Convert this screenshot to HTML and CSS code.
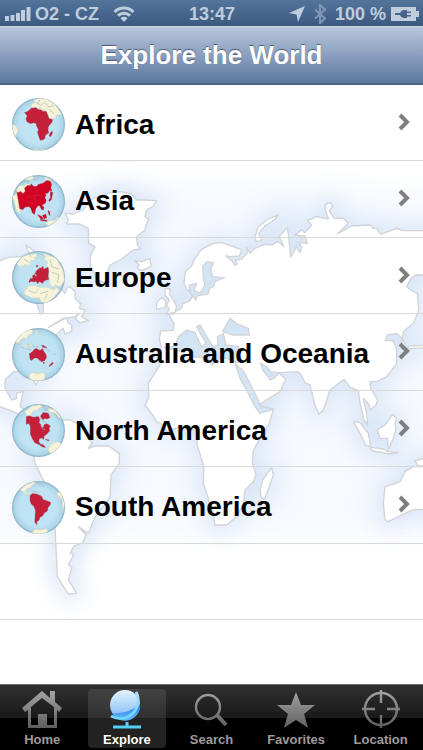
FILE: index.html
```html
<!DOCTYPE html>
<html lang="en">
<head>
    <meta charset="UTF-8">
    <meta name="viewport" content="width=device-width, initial-scale=1.0">
    <title>Explore the World</title>
    <link rel="stylesheet" href="styles.css">
</head>
<body>
    <div class="status-bar">
        <div class="status-left">
            <svg class="signal" viewBox="0 0 26 14" width="26" height="14">
                <path d="M0 9h4v5H0zM5.500 8h4v6h-4zM11 6h4v8h-4zM16 3h4v11h-4zM21.500 0h4v14h-4z"/>
            </svg>
            <span>O2 - CZ</span>
            <svg class="wifi" viewBox="0 0 22 16" width="22" height="16">
                <path d="M1.500 6a13.500 13.500 0 0 1 19 0M5 9.600a8.600 8.600 0 0 1 12 0"/>
                <path class="dot" d="M7.500 12.200a5 5 0 0 1 7 0L11 16z"/>
            </svg>
        </div>
        <div class="status-time">13:47</div>
        <div class="status-right">
            <svg viewBox="0 0 16 16" width="16" height="16"><path d="M16 0L9 16 7.600 8.400 0 7z"/></svg>
            <svg class="bluetooth" viewBox="0 0 12 20" width="12" height="20"><path d="M1 5.500l10 9L6 19V1l5 4.500-10 9"/></svg>
            <span>100 %</span>
            <svg viewBox="0 0 28 14" width="28" height="14">
                <path fill-rule="evenodd" d="M0 0h25v4h3v6h-3v4H0zM4 6v2h5c1 2 2 3 4 3h3V9.500h4V8h-4V6h4V4.500h-4V3h-3c-2 0-3 1-4 3z"/>
            </svg>
        </div>
    </div>

    <header class="nav-bar">
        <h1>Explore the World</h1>
    </header>

    <main class="content">
        <svg class="world-map" viewBox="0 -195 1269 1800" preserveAspectRatio="xMidYMin slice" aria-hidden="true">
            <defs>
                <filter id="halo" x="-20%" y="-20%" width="140%" height="140%"><feGaussianBlur stdDeviation="34"/></filter>
                <g id="land">
                    <!-- Greenland and Iceland -->
                    <path d="M195 190L220 192 250 180 270 150 320 130 360 125 395 132 410 150 430 150 470 152 460 168 440 180 435 200 446 208 438 225 435 240 410 260 412 285 422 297 400 300 360 330 330 345 325 360 315 400 290 385 272 350 270 320 285 290 266 280 265 235 240 222 200 222 205 208z"/>
                    <path d="M405 332L425 335 450 325 453 350 425 362 412 355 418 345z"/>
                    <!-- North America -->
                    <path d="M-90 340L0 332 25 322 90 318 78 285 95 298 105 306 125 340 120 370 60 400 60 430 110 460 120 492 130 490 130 460 150 410 170 400 195 430 200 415 210 410 225 425 225 445 242 462 238 475 255 480 245 500 265 512 240 518 225 505 238 490 225 500 190 505 145 532 200 503 205 520 215 525 215 545 195 552 190 535 160 560 110 640 115 690 108 705 95 680 90 665 40 665 15 690 15 715 35 750 50 745 50 730 70 725 60 770 90 790 100 800 100 830 70 800 40 785 0 770 -90 730z"/>
                    <!-- South America -->
                    <path d="M100 900L105 850 130 800 190 810 210 810 240 825 260 850 275 880 265 895 285 888 325 888 358 910 358 940 333 975 330 1040 320 1058 300 1080 290 1090 265 1150 235 1130 258 1155 248 1178 222 1188 210 1210 220 1210 218 1220 205 1245 216 1252 205 1290 218 1310 230 1330 205 1332 172 1280 165 1130 135 1000 105 940z"/>
                    <!-- Europe, Asia and Africa -->
                    <path d="M484 590L478 570 482 543 520 541 522 520 505 492 520 492 525 485 545 475 548 462 570 452 578 440 575 430 560 418 552 400 556 365 575 348 585 325 605 298 640 280 665 278 700 290 725 300 718 318 690 320 678 318 695 332 705 346 712 342 705 330 725 328 742 308 740 292 750 310 765 295 795 283 815 285 835 275 852 290 838 260 862 232 866 260 872 322 885 300 888 288 900 308 905 292 895 278 922 280 915 258 900 258 885 255 905 240 915 248 935 225 922 212 950 200 985 207 975 175 978 162 990 158 998 168 988 182 1002 205 1030 205 1045 220 1012 252 1055 228 1110 225 1120 235 1130 235 1142 252 1165 245 1190 235 1210 242 1269 242 1300 240 1300 375 1245 375 1230 390 1220 410 1240 425 1252 430 1256 480 1240 520 1210 545 1207 565 1225 600 1210 600 1205 565 1190 550 1162 555 1155 572 1180 572 1190 600 1190 640 1160 680 1130 695 1110 695 1112 715 1133 750 1128 765 1110 780 1108 765 1090 745 1100 790 1103 825 1092 810 1080 760 1075 722 1050 712 1032 688 990 720 980 750 970 780 957 793 945 765 930 705 915 698 905 678 895 665 835 668 857 687 840 725 775 765 785 780 820 778 808 820 790 850 760 900 757 940 768 975 760 995 735 1020 730 1060 710 1100 680 1125 645 1125 640 1090 610 1000 612 950 590 880 595 860 590 845 570 835 540 830 500 845 490 825 470 815 458 795 435 765 447 740 445 700 480 645z"/>
                    <path d="M815 953L820 975 795 1045 785 1045 780 1025 788 990z"/>
                    <path d="M495 415L512 417 508 432 520 450 530 470 525 487 498 492 508 478 500 465 508 450 495 435zM470 458L485 442 497 455 495 472 470 478z"/>
                    <path d="M768 275L766 258 775 230 800 210 835 194 825 208 795 228 776 250 785 272z"/>
                    <!-- Indonesia and Australia -->
                    <path d="M1060 815L1080 818 1105 850 1112 890 1097 885 1080 850zM1132 840L1155 825 1178 793 1190 805 1185 820 1188 840 1180 865 1165 898 1162 865 1140 865zM1112 892L1150 897 1165 905 1195 908 1170 912 1115 902z"/>
                    <path d="M1300 950L1240 950 1215 965 1200 995 1180 1002 1155 1010 1150 1060 1155 1110 1165 1115 1240 1078 1300 1080zM1245 932L1275 925 1300 935 1300 945 1255 948z"/>
                    <path d="M1215 598L1230 588 1300 585 1300 592 1240 595z"/>
                </g>
            </defs>
            <path class="ocean" d="M-90 130L300 100 1000 100 1350 130 1350 1160 -90 1160z" filter="url(#halo)"/>
            <use href="#land" class="coast-glow" filter="url(#halo)"/>
            <use href="#land" class="land"/>
            <!-- Baltic, Mediterranean, Black Sea, Red Sea, Persian Gulf -->
            <path class="sea" d="M608 350L620 335 640 338 632 360 638 380 672 383 645 395 640 410 628 415 625 432 590 438 588 450 568 425 568 405 590 400 582 420 600 430 615 405 610 380z"/>
            <path class="sea" d="M490 592L525 590 535 560 560 540 585 548 605 590 618 580 590 530 600 525 620 560 640 592 655 585 652 560 670 552 678 585 715 590 715 638 680 625 660 625 635 645 620 622 600 622 575 620 580 600 530 602z"/>
            <path class="sea" d="M668 545L690 505 712 522 745 535 748 555 700 555z"/>
            <path class="sea" d="M705 640L715 650 730 662 765 730 782 768 820 778 780 790 765 770 740 720 722 690z"/>
            <path class="sea" d="M782 640L800 650 812 665 838 668 822 685 810 690 800 675 788 660z"/>
        </svg>

        <ul class="continents">
            <li><a href="#africa">
                <svg class="globe" viewBox="0 0 156 156" aria-hidden="true">
                    <defs>
                        <radialGradient id="water" cx="50%" cy="50%" r="50%">
                            <stop offset="0.700" stop-color="#bfe3f3"/><stop offset="0.920" stop-color="#acd5e8"/><stop offset="1" stop-color="#84abc0"/>
                        </radialGradient>
                        <clipPath id="disc"><circle cx="78" cy="78" r="77"/></clipPath>
                    </defs>
                    <circle cx="78" cy="78" r="78" fill="url(#water)"/>
                    <g clip-path="url(#disc)">
                        <path class="other" d="M56 27l2-10 10-3-4-8 18-6 20 4 25 15 20 30-14 0-8 12-13 2-6-12-8-15-10-2-6-5-9 2-6-6-6 4zM0 78l12 4 6 14-6 14-8 10zM62 151l20 2 16-3-4 8H64z"/>
                        <path class="lines" d="M70 12l14 10 12-10 12 14 14-3M110 34l14 12M82 5l-6 12"/>
                        <path class="picked" d="M37 43l9-3 11-10 15-1 4 5 10 1 4 4 11 1 4 10 4 11 11 2-3 9-10 12-1 10 2 9-9 5-3 12-5 3-8 1-3-8-5-15 3-8-6-11 0-6-8-3-10 2-10-5-3-9 4-8zM118 97l1 7-5 10-4-2 1-7z"/>
                    </g>
                </svg>
                <span class="name">Africa</span>
                <svg class="chevron" viewBox="0 0 12 18" width="12" height="18" aria-hidden="true"><path d="M2 2l7 7-7 7"/></svg>
            </a></li>
            <li><a href="#asia">
                <svg class="globe" viewBox="0 0 156 156" aria-hidden="true">
                    <circle cx="78" cy="78" r="78" fill="url(#water)"/>
                    <g clip-path="url(#disc)">
                        <path class="other" d="M0 60l12-2 4-20 8-8 10 2 12-8 10 6-6 14-20 12-10 34 6 26-12-10zM96 144l14-10 16 0 8-10 8 4-20 26zM94 6l12 3 14 12-10-2-12-6zM38 12l20-8 8 4-14 8z"/>
                        <path class="lines" d="M30 22l14-4 6 6M62 12l8 3 8-7M50 14l-4 12"/>
                        <path class="picked deep" d="M14 49l4 3 8-4 6 7 7-7-2-10 10-8 7 2 3-6 6 7 9 1 5-6 14-4 12-8 9 2 5 10-3 9 4 10-7-2-5 8-9 2 4 6-5 4 5 9-3 9-10 6 6 6-2 9-6-4-4-9-5-1-7 9-4 17-6-4-5-15-6-4-11 2-6 7-9-3zM113 48l7 4-4 20-6 6-2-4 5-6zM75 116l13 6 5 9-9-2zM90 119l10-4 2 11-8 3zM84 131l20 2-3 3-17-2zM106 104l5 4 1 12-4-5z"/>
                        <path class="borders" d="M38 66l18-2 16-6 20 4M66 60l4 24M42 78l22 8"/>
                    </g>
                </svg>
                <span class="name">Asia</span>
                <svg class="chevron" viewBox="0 0 12 18" width="12" height="18" aria-hidden="true"><path d="M2 2l7 7-7 7"/></svg>
            </a></li>
            <li><a href="#europe">
                <svg class="globe" viewBox="0 0 156 156" aria-hidden="true">
                    <circle cx="78" cy="78" r="78" fill="url(#water)"/>
                    <g clip-path="url(#disc)">
                        <path class="other" d="M14 38l14-20 20-8 22-2 6 8-10 4 4 8-14 0-6 14-12-2-14 8zM90 6l40 15 20 35 5 30-14 20-14-6-8 8-8-12-4-46-6-8 4-10-12-8 6-8zM34 124l14-20 20-3 12 6 22-1 20 8 10-6 8 8-20 24-20 14-14-4-6-12-20 0-16-6z"/>
                        <path class="lines" d="M112 26l6 22 20 4M118 62l20 8-4 24M48 116l20 8 10-12M82 126l24-8M96 142l8-16M36 24l14 10M56 18l-4-8"/>
                        <path class="picked" d="M50 90l4-9 8 0-2-8 6-4 4 6 4-2-6-6 4-9 10-8 8 0 6 3 10-5 2 12-2 12 2 12-12 3-6 8-9-5-6 6-4-8-6 3-8-2-6 4zM72 42l4 1-1 4-4-1zM88 46l4 0-1 4-3-1z"/>
                    </g>
                </svg>
                <span class="name">Europe</span>
                <svg class="chevron" viewBox="0 0 12 18" width="12" height="18" aria-hidden="true"><path d="M2 2l7 7-7 7"/></svg>
            </a></li>
            <li><a href="#oceania">
                <svg class="globe" viewBox="0 0 156 156" aria-hidden="true">
                    <circle cx="78" cy="78" r="78" fill="url(#water)"/>
                    <g clip-path="url(#disc)">
                        <path class="other" d="M8 42l14-26L46 3l16 4-4 12-10 2-3 9-11 0-9 5-6 12zM52 134l14-3 4 4 22-4 6 8-4 14-30 4-14-9zM68 8l8 3-3 8-3-4zM28 46l10 6 6 9-8-5zM46 50l10-3 0 7-8 3z"/>
                        <path class="lines" d="M14 40l8 10M26 54l12 8M42 62l14 2M48 46l4 12M60 46l4 10M70 54l8 2M104 64l8 4M122 76l6 3"/>
                        <path class="picked" d="M51 76l8-5 8-9 6-2 4 4 6 2 6-6 5 9 7 11 0 8-6 9-8 2-8-6-5-5-8 0-9 8-4-5zM87 50l8 3 8 6-12-2zM119 101l3 2-6 7-7 3 2-4zM92 101l4 1-3 4z"/>
                    </g>
                </svg>
                <span class="name">Australia and Oceania</span>
                <svg class="chevron" viewBox="0 0 12 18" width="12" height="18" aria-hidden="true"><path d="M2 2l7 7-7 7"/></svg>
            </a></li>
            <li><a href="#north-america">
                <svg class="globe" viewBox="0 0 156 156" aria-hidden="true">
                    <circle cx="78" cy="78" r="78" fill="url(#water)"/>
                    <g clip-path="url(#disc)">
                        <path class="other" d="M38 22L58 6l24-4 8 7-12 4-2 7-10-2-10 12-6 6-6-2zM102 10l24 8 22 26-10-4-12-12-14-4zM106 136l6-16 10-6 12-3 12 6-6 14-18 18-8-4z"/>
                        <path class="lines" d="M90 8l14 8 6-6M120 26l12 6-2 8 12 4M94 16l10 4"/>
                        <path class="picked" d="M42 37l10-2 12 4 14-2 4 10-3 8 5 4 2 9 6 2 3-10 8-2 10 7-4 8 2 6-9 10-8 6 0 9-7-4-7 2-1 10 6 7 6 0 8 9-10-2-10-7-12-5-8-14-5-12 0-22-4-9-8 3zM84 35l8-10 14 2 6 12-8 5-8-2-4 4-6-5zM98 104l12 2-4 2z"/>
                        <path class="lines" d="M82 42l12 8M84 50l18 4M90 64l-2 8 10 4"/>
                    </g>
                </svg>
                <span class="name">North America</span>
                <svg class="chevron" viewBox="0 0 12 18" width="12" height="18" aria-hidden="true"><path d="M2 2l7 7-7 7"/></svg>
            </a></li>
            <li><a href="#south-america">
                <svg class="globe" viewBox="0 0 156 156" aria-hidden="true">
                    <circle cx="78" cy="78" r="78" fill="url(#water)"/>
                    <g clip-path="url(#disc)">
                        <path class="other" d="M24 26l18-16 20-7 10 3-12 6-6 8-8 2-8 8 8 6 6 5-10-2-10-8zM132 36l10-4 14 36-8 22 0-34-12-6zM60 148l10-6 18 2 12-4 6 6-10 10H64z"/>
                        <path class="lines" d="M56 28l12 3 8 3M66 10l10-4 6 4M84 10l10 3M138 44l8 10"/>
                        <path class="picked" d="M53 43l8-6 10 1 10 4 6 3 5 10 10 3 12 5-2 8-6 7-2 10-9 6-5 9-8 4-2 8-6 4-2 6 3 2-4 0-4-7 1-14 1-20-4-10-9-10-3-8z"/>
                    </g>
                </svg>
                <span class="name">South America</span>
                <svg class="chevron" viewBox="0 0 12 18" width="12" height="18" aria-hidden="true"><path d="M2 2l7 7-7 7"/></svg>
            </a></li>
            <li></li>
        </ul>
    </main>

    <nav class="tab-bar">
        <a href="#home" class="tab">
            <svg viewBox="0 0 40 40" width="40" height="40" aria-hidden="true">
                <defs>
                    <linearGradient id="grey" gradientUnits="userSpaceOnUse" x1="0" y1="2" x2="0" y2="40"><stop offset="0" stop-color="#a4a4a4"/><stop offset="1" stop-color="#5c5c5c"/></linearGradient>
                    <linearGradient id="sphere" x1="0" y1="0" x2="0" y2="1"><stop offset="0" stop-color="#e4f4ff"/><stop offset="1" stop-color="#79b5f5"/></linearGradient>
                    <linearGradient id="lower" x1="0" y1="0" x2="0" y2="1"><stop offset="0" stop-color="#2681ec"/><stop offset="1" stop-color="#62b8fb"/></linearGradient>
                    <linearGradient id="stand" gradientUnits="userSpaceOnUse" x1="0" y1="2" x2="0" y2="38"><stop offset="0" stop-color="#b9dcfa"/><stop offset="1" stop-color="#53d0f8"/></linearGradient>
                </defs>
                <path fill="url(#grey)" fill-rule="evenodd" d="M20 2l8 7V2h5v11l7 6-3 4-2-2v18H6V21l-3 2-3-4zM20 9L9 18v18h7V25h9v11h7V18z"/>
                <path fill="url(#grey)" d="M16 25h9v12h-9z"/>
            </svg>
            <span>Home</span>
        </a>
        <a href="#explore" class="tab active">
            <svg viewBox="0 0 40 40" width="40" height="40" aria-hidden="true">
                <circle cx="18" cy="16" r="15" fill="url(#sphere)"/>
                <path d="M5 24c10 1 20-2 28-9a15 15 0 0 1-28 9z" fill="url(#lower)"/>
                <path class="arm" d="M29 3a18 18 0 0 1-25 24M20 33v5M6 38h28"/>
            </svg>
            <span>Explore</span>
        </a>
        <a href="#search" class="tab">
            <svg class="outline" viewBox="0 0 40 40" width="40" height="40" aria-hidden="true">
                <circle cx="17" cy="18" r="12" stroke-width="2.500"/><path d="M26 26l9 10" stroke-width="4"/>
            </svg>
            <span>Search</span>
        </a>
        <a href="#favorites" class="tab">
            <svg viewBox="0 0 40 40" width="40" height="40" aria-hidden="true">
                <path fill="url(#grey)" d="M20 3l5 13h14L28 25l4 14-12-8-12 8 4-14L1 16h14z"/>
            </svg>
            <span>Favorites</span>
        </a>
        <a href="#location" class="tab">
            <svg class="outline" viewBox="0 0 40 40" width="40" height="40" aria-hidden="true">
                <circle cx="20" cy="20" r="16" stroke-width="2.500"/>
                <path class="ticks" d="M18.800 1h2.400v13h-2.400zM18.800 26h2.400v13h-2.400zM1 18.800h13v2.400H1zM26 18.800h13v2.400H26z"/>
            </svg>
            <span>Location</span>
        </a>
    </nav>
</body>
</html>
```
FILE: styles.css
```css
/* General Styles */
* {
    box-sizing: border-box;
}
body {
    margin: 0;
    min-height: 100vh;
    display: flex;
    flex-direction: column;
    font-family: "Liberation Sans", Arial, sans-serif;
    font-weight: bold;
    background-color: #fff;
    color: #000;
}
a {
    color: inherit;
    text-decoration: none;
}

/* Status Bar */
.status-bar {
    display: grid;
    grid-template-columns: 1fr auto 1fr;
    align-items: center;
    height: 26px;
    padding: 1px 4px 0 5px;
    background: linear-gradient(#54749a, #3c5980);
    color: #bfcddd;
    font-size: 18px;
    line-height: 24px;
}
.status-bar svg {
    fill: #bfcddd;
}
.status-left,
.status-right {
    display: flex;
    align-items: center;
    gap: 4px;
}
.status-right {
    justify-content: flex-end;
    gap: 5px;
}
.status-bar .wifi {
    margin-left: 10px;
    fill: none;
    stroke: #bfcddd;
    stroke-width: 3;
}
.status-bar .wifi .dot {
    fill: #bfcddd;
    stroke: none;
}
.status-bar .bluetooth {
    margin: 0 4px;
    fill: none;
    stroke: #7f98b6;
    stroke-width: 2;
}

/* Navigation Bar */
.nav-bar {
    height: 59px;
    border-top: 1px solid #cbd6e3;
    border-bottom: 2px solid #4a6388;
    background: linear-gradient(#b9c7da, #8a9fbe 50%, #5d789f);
}
.nav-bar h1 {
    margin: 0;
    text-align: center;
    font-size: 26px;
    line-height: 56px;
    color: #fff;
    text-shadow: 0 -1px 1px #4b5c78;
}

/* Continent List */
.content {
    position: relative;
    flex: 1;
    overflow: hidden;
}
.world-map {
    position: absolute;
    top: 0;
    left: 0;
    width: 100%;
    height: 100%;
}
.ocean {
    fill: #f6f9fe;
}
.coast-glow {
    fill: #d9e6f7;
    stroke: #d9e6f7;
    stroke-width: 36;
}
.land {
    fill: #fff;
    stroke: #d2d4d8;
    stroke-width: 4;
    stroke-linejoin: round;
}
.sea {
    fill: #d3e5f5;
    stroke: #d2d4d8;
    stroke-width: 4;
}
.continents {
    position: relative;
    margin: 0;
    padding: 0;
    list-style: none;
}
.continents li {
    height: 76px;
    border-bottom: 1px solid #d9d9d9;
}
.continents li:nth-child(even) {
    height: 77px;
}
.continents a {
    display: flex;
    align-items: center;
    height: 100%;
    padding: 4px 13px 0 12px;
}
.globe {
    width: 53px;
    height: 53px;
    margin-right: 10px;
}
.globe .other {
    fill: #f6f3d8;
    stroke: #d0d6c6;
    stroke-width: 2;
}
.globe .picked {
    fill: #c4203a;
    stroke: #a9344a;
    stroke-width: 1;
}
.globe .deep {
    fill: #d00423;
}
.globe .lines {
    fill: none;
    stroke: #a3b6b8;
    stroke-width: 2;
}
.globe .borders {
    fill: none;
    stroke: #e0404c;
    stroke-width: 1;
}
.name {
    flex: 1;
    font-size: 28px;
    line-height: 32px;
}
.chevron {
    margin-bottom: 6px;
    fill: none;
    stroke: #7f7f7f;
    stroke-width: 4;
}

/* Tab Bar */
.tab-bar {
    display: flex;
    height: 66px;
    border-top: 1px solid #6a6a6a;
    background: linear-gradient(#303030, #191919 33px, #000 33px);
}
.tab {
    flex: 1;
    display: flex;
    flex-direction: column;
    align-items: center;
    gap: 1px;
    margin: 4px 3px 2px;
    border-radius: 4px;
    font-size: 13px;
    line-height: 20px;
    color: #9b9b9b;
}
.tab svg {
    flex-shrink: 0;
}
.tab.active {
    background: linear-gradient(#424242, #303030 29px, #222 29px);
    color: #fff;
}
.tab .outline {
    fill: none;
    stroke: url(#grey);
}
.tab .outline .ticks {
    fill: url(#grey);
    stroke: none;
}
.tab .arm {
    fill: none;
    stroke: url(#stand);
    stroke-width: 3;
}
```
